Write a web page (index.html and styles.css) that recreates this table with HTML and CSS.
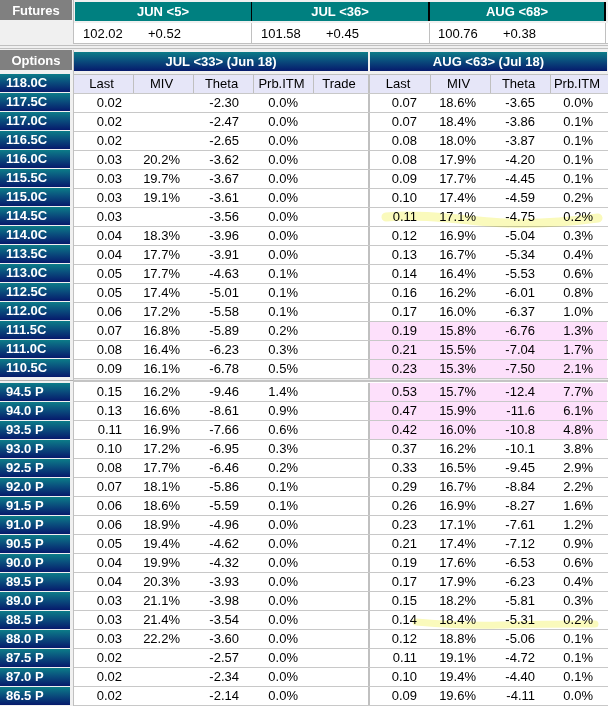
FILE: index.html
```html
<!DOCTYPE html>
<html>
<head>
<meta charset="utf-8">
<link rel="stylesheet" href="styles.css">
</head>
<body>
<div class="top">
  <div class="flabel">Futures</div>
  <div class="fbox">
    <div class="fhead"><div>JUN &lt;5&gt;</div><div>JUL &lt;36&gt;</div><div>AUG &lt;68&gt;</div></div>
    <div class="fvals">
      <div><span class="p">102.02</span><span>+0.52</span></div>
      <div><span class="p">101.58</span><span>+0.45</span></div>
      <div class="last"><span class="p">100.76</span><span>+0.38</span></div>
    </div>
  </div>
</div>
<div class="sep"></div>
<div class="opt">
  <div class="left">
    <div class="olabel">Options</div>
    <div class="strike">118.0C</div>
    <div class="strike">117.5C</div>
    <div class="strike">117.0C</div>
    <div class="strike">116.5C</div>
    <div class="strike">116.0C</div>
    <div class="strike">115.5C</div>
    <div class="strike">115.0C</div>
    <div class="strike">114.5C</div>
    <div class="strike">114.0C</div>
    <div class="strike">113.5C</div>
    <div class="strike">113.0C</div>
    <div class="strike">112.5C</div>
    <div class="strike">112.0C</div>
    <div class="strike">111.5C</div>
    <div class="strike">111.0C</div>
    <div class="strike">110.5C</div>
    <div class="lsep"></div>
    <div class="strike">94.5 P</div>
    <div class="strike">94.0 P</div>
    <div class="strike">93.5 P</div>
    <div class="strike">93.0 P</div>
    <div class="strike">92.5 P</div>
    <div class="strike">92.0 P</div>
    <div class="strike">91.5 P</div>
    <div class="strike">91.0 P</div>
    <div class="strike">90.5 P</div>
    <div class="strike">90.0 P</div>
    <div class="strike">89.5 P</div>
    <div class="strike">89.0 P</div>
    <div class="strike">88.5 P</div>
    <div class="strike">88.0 P</div>
    <div class="strike">87.5 P</div>
    <div class="strike">87.0 P</div>
    <div class="strike">86.5 P</div>
  </div>
  <div class="right">
    <div class="mhead"><div class="mj">JUL &lt;33&gt; (Jun 18)</div><div class="mg"></div><div class="ma">AUG &lt;63&gt; (Jul 18)</div></div>
    <div class="tbl">
      <div class="row hdr"><span>Last</span><span>MIV</span><span>Theta</span><span>Prb.ITM</span><span>Trade</span><span>Last</span><span>MIV</span><span>Theta</span><span>Prb.ITM</span></div>
      <div class="row"><span>0.02</span><span></span><span>-2.30</span><span>0.0%</span><span></span><span>0.07</span><span>18.6%</span><span>-3.65</span><span>0.0%</span></div>
      <div class="row"><span>0.02</span><span></span><span>-2.47</span><span>0.0%</span><span></span><span>0.07</span><span>18.4%</span><span>-3.86</span><span>0.1%</span></div>
      <div class="row"><span>0.02</span><span></span><span>-2.65</span><span>0.0%</span><span></span><span>0.08</span><span>18.0%</span><span>-3.87</span><span>0.1%</span></div>
      <div class="row"><span>0.03</span><span>20.2%</span><span>-3.62</span><span>0.0%</span><span></span><span>0.08</span><span>17.9%</span><span>-4.20</span><span>0.1%</span></div>
      <div class="row"><span>0.03</span><span>19.7%</span><span>-3.67</span><span>0.0%</span><span></span><span>0.09</span><span>17.7%</span><span>-4.45</span><span>0.1%</span></div>
      <div class="row"><span>0.03</span><span>19.1%</span><span>-3.61</span><span>0.0%</span><span></span><span>0.10</span><span>17.4%</span><span>-4.59</span><span>0.2%</span></div>
      <div class="row"><span>0.03</span><span></span><span>-3.56</span><span>0.0%</span><span></span><span>0.11</span><span>17.1%</span><span>-4.75</span><span>0.2%</span></div>
      <div class="row"><span>0.04</span><span>18.3%</span><span>-3.96</span><span>0.0%</span><span></span><span>0.12</span><span>16.9%</span><span>-5.04</span><span>0.3%</span></div>
      <div class="row"><span>0.04</span><span>17.7%</span><span>-3.91</span><span>0.0%</span><span></span><span>0.13</span><span>16.7%</span><span>-5.34</span><span>0.4%</span></div>
      <div class="row"><span>0.05</span><span>17.7%</span><span>-4.63</span><span>0.1%</span><span></span><span>0.14</span><span>16.4%</span><span>-5.53</span><span>0.6%</span></div>
      <div class="row"><span>0.05</span><span>17.4%</span><span>-5.01</span><span>0.1%</span><span></span><span>0.16</span><span>16.2%</span><span>-6.01</span><span>0.8%</span></div>
      <div class="row"><span>0.06</span><span>17.2%</span><span>-5.58</span><span>0.1%</span><span></span><span>0.17</span><span>16.0%</span><span>-6.37</span><span>1.0%</span></div>
      <div class="row pk"><span>0.07</span><span>16.8%</span><span>-5.89</span><span>0.2%</span><span></span><span>0.19</span><span>15.8%</span><span>-6.76</span><span>1.3%</span></div>
      <div class="row pk"><span>0.08</span><span>16.4%</span><span>-6.23</span><span>0.3%</span><span></span><span>0.21</span><span>15.5%</span><span>-7.04</span><span>1.7%</span></div>
      <div class="row pk"><span>0.09</span><span>16.1%</span><span>-6.78</span><span>0.5%</span><span></span><span>0.23</span><span>15.3%</span><span>-7.50</span><span>2.1%</span></div>
      <div class="csep"></div>
      <div class="row pk"><span>0.15</span><span>16.2%</span><span>-9.46</span><span>1.4%</span><span></span><span>0.53</span><span>15.7%</span><span>-12.4</span><span>7.7%</span></div>
      <div class="row pk"><span>0.13</span><span>16.6%</span><span>-8.61</span><span>0.9%</span><span></span><span>0.47</span><span>15.9%</span><span>-11.6</span><span>6.1%</span></div>
      <div class="row pk"><span>0.11</span><span>16.9%</span><span>-7.66</span><span>0.6%</span><span></span><span>0.42</span><span>16.0%</span><span>-10.8</span><span>4.8%</span></div>
      <div class="row"><span>0.10</span><span>17.2%</span><span>-6.95</span><span>0.3%</span><span></span><span>0.37</span><span>16.2%</span><span>-10.1</span><span>3.8%</span></div>
      <div class="row"><span>0.08</span><span>17.7%</span><span>-6.46</span><span>0.2%</span><span></span><span>0.33</span><span>16.5%</span><span>-9.45</span><span>2.9%</span></div>
      <div class="row"><span>0.07</span><span>18.1%</span><span>-5.86</span><span>0.1%</span><span></span><span>0.29</span><span>16.7%</span><span>-8.84</span><span>2.2%</span></div>
      <div class="row"><span>0.06</span><span>18.6%</span><span>-5.59</span><span>0.1%</span><span></span><span>0.26</span><span>16.9%</span><span>-8.27</span><span>1.6%</span></div>
      <div class="row"><span>0.06</span><span>18.9%</span><span>-4.96</span><span>0.0%</span><span></span><span>0.23</span><span>17.1%</span><span>-7.61</span><span>1.2%</span></div>
      <div class="row"><span>0.05</span><span>19.4%</span><span>-4.62</span><span>0.0%</span><span></span><span>0.21</span><span>17.4%</span><span>-7.12</span><span>0.9%</span></div>
      <div class="row"><span>0.04</span><span>19.9%</span><span>-4.32</span><span>0.0%</span><span></span><span>0.19</span><span>17.6%</span><span>-6.53</span><span>0.6%</span></div>
      <div class="row"><span>0.04</span><span>20.3%</span><span>-3.93</span><span>0.0%</span><span></span><span>0.17</span><span>17.9%</span><span>-6.23</span><span>0.4%</span></div>
      <div class="row"><span>0.03</span><span>21.1%</span><span>-3.98</span><span>0.0%</span><span></span><span>0.15</span><span>18.2%</span><span>-5.81</span><span>0.3%</span></div>
      <div class="row"><span>0.03</span><span>21.4%</span><span>-3.54</span><span>0.0%</span><span></span><span>0.14</span><span>18.4%</span><span>-5.31</span><span>0.2%</span></div>
      <div class="row"><span>0.03</span><span>22.2%</span><span>-3.60</span><span>0.0%</span><span></span><span>0.12</span><span>18.8%</span><span>-5.06</span><span>0.1%</span></div>
      <div class="row"><span>0.02</span><span></span><span>-2.57</span><span>0.0%</span><span></span><span>0.11</span><span>19.1%</span><span>-4.72</span><span>0.1%</span></div>
      <div class="row"><span>0.02</span><span></span><span>-2.34</span><span>0.0%</span><span></span><span>0.10</span><span>19.4%</span><span>-4.40</span><span>0.1%</span></div>
      <div class="row"><span>0.02</span><span></span><span>-2.14</span><span>0.0%</span><span></span><span>0.09</span><span>19.6%</span><span>-4.11</span><span>0.0%</span></div>
    </div>
  </div>
</div>
<svg class="marks" width="608" height="706" viewBox="0 0 608 706">
  <path d="M386 217 C 420 214, 455 219, 490 222 S 560 223, 598 218" fill="none" stroke="#fafabc" stroke-width="9" stroke-linecap="round"/>
  <path d="M416 622 C 440 624, 470 626, 500 625 S 570 624, 595 624" fill="none" stroke="#fafabc" stroke-width="7" stroke-linecap="round"/>
</svg>
</body>
</html>
```
FILE: styles.css
```css
* { box-sizing: border-box; }
body {
  margin: 0;
  width: 608px;
  height: 706px;
  overflow: hidden;
  position: relative;
  background: #f0f0f0;
  font-family: "Liberation Sans", Arial, sans-serif;
  font-size: 13px;
  color: #000;
}
.top { display: flex; height: 44px; }
.flabel, .olabel {
  width: 72px;
  height: 20px;
  background: #808080;
  color: #fff;
  font-weight: bold;
  display: flex;
  align-items: center;
  justify-content: center;
}
.fbox {
  margin-left: 1px;
  width: 535px;
  border-left: 1px solid #c0c0c0;
  border-bottom: 1px solid #c0c0c0;
  padding-top: 2px;
}
.fhead { display: flex; height: 19px; margin-left: 1px; margin-bottom: 2px; }
.fhead div {
  background: #008080;
  color: #fff;
  font-weight: bold;
  display: flex;
  align-items: center;
  justify-content: center;
  border-right: 1px solid #000;
}
.fhead div:nth-child(1) { width: 177px; }
.fhead div:nth-child(2) { width: 178px; border-right-width: 2px; }
.fhead div:nth-child(3) { width: 176px; border-right-width: 2px; }
.fvals { display: flex; height: 20px; background: #fff; }
.fvals div {
  display: flex;
  align-items: center;
  border-right: 1px solid #c0c0c0;
  padding-left: 9px;
  width: 178px;
}
.fvals div.last { width: 176px; padding-left: 8px; }
.fvals .p { width: 65px; }
.sep {
  height: 4px;
  margin: 1px 0;
  border-top: 1px solid #c0c0c0;
  border-bottom: 1px solid #c0c0c0;
}
.opt { display: flex; }
.left { width: 73px; }
.olabel { margin-bottom: 4px; }
.strike {
  width: 70px;
  height: 18px;
  margin-bottom: 1px;
  background: linear-gradient(to bottom, #0c7c88 0%, #0a4f7d 45%, #061a6c 100%);
  color: #fff;
  font-weight: bold;
  line-height: 18px;
  padding-left: 6px;
}
.lsep {
  height: 5px;
  background: linear-gradient(to bottom, transparent 2px, #b0b0b0 2px, #b0b0b0 3px, transparent 3px);
}
.right {
  width: 535px;
  border-left: 1px solid #c0c0c0;
  padding-top: 2px;
}
.mhead { display: flex; height: 19px; margin-bottom: 3px; }
.mhead .mj, .mhead .ma {
  background: linear-gradient(to bottom, #0c7c88 0%, #0a4f7d 45%, #061a6c 100%);
  color: #fff;
  font-weight: bold;
  display: flex;
  align-items: center;
  justify-content: center;
}
.mhead .mj { width: 294px; }
.mhead .mg { width: 2px; }
.mhead .ma { width: 237px; }
.tbl { border-top: 1px solid #c0c0c0; background: #fff; }
.row {
  display: grid;
  grid-template-columns: 60px 60px 60px 60px 54px 63px 60px 60px 56px;
  height: 19px;
  border-bottom: 1px solid #c8c8c8;
  line-height: 18px;
}
.row span { text-align: right; white-space: nowrap; }
.row span:nth-child(1) { padding-right: 12px; }
.row span:nth-child(2) { padding-right: 14px; }
.row span:nth-child(3) { padding-right: 15px; }
.row span:nth-child(4) { padding-right: 16px; }
.row span:nth-child(6) { border-left: 2px solid #c0c0c0; padding-right: 14px; }
.row span:nth-child(7) { padding-right: 15px; }
.row span:nth-child(8) { padding-right: 16px; }
.row span:nth-child(9) { padding-right: 14px; }
.row.hdr { background: #e6e6f8; }
.row.hdr span { text-align: center; padding-right: 4px; border-right: 1px solid #c0c0c0; }
.row.hdr span:nth-child(5), .row.hdr span:nth-child(9) { border-right: none; }
.pk span:nth-child(n+6) { background: #fde0fb; }
.csep {
  height: 4px;
  background: #c4c4c4;
  border-top: 1px solid #ececec;
  border-bottom: 1px solid #fff;
}
.marks {
  position: absolute;
  left: 0;
  top: 0;
  pointer-events: none;
  mix-blend-mode: multiply;
}
```
